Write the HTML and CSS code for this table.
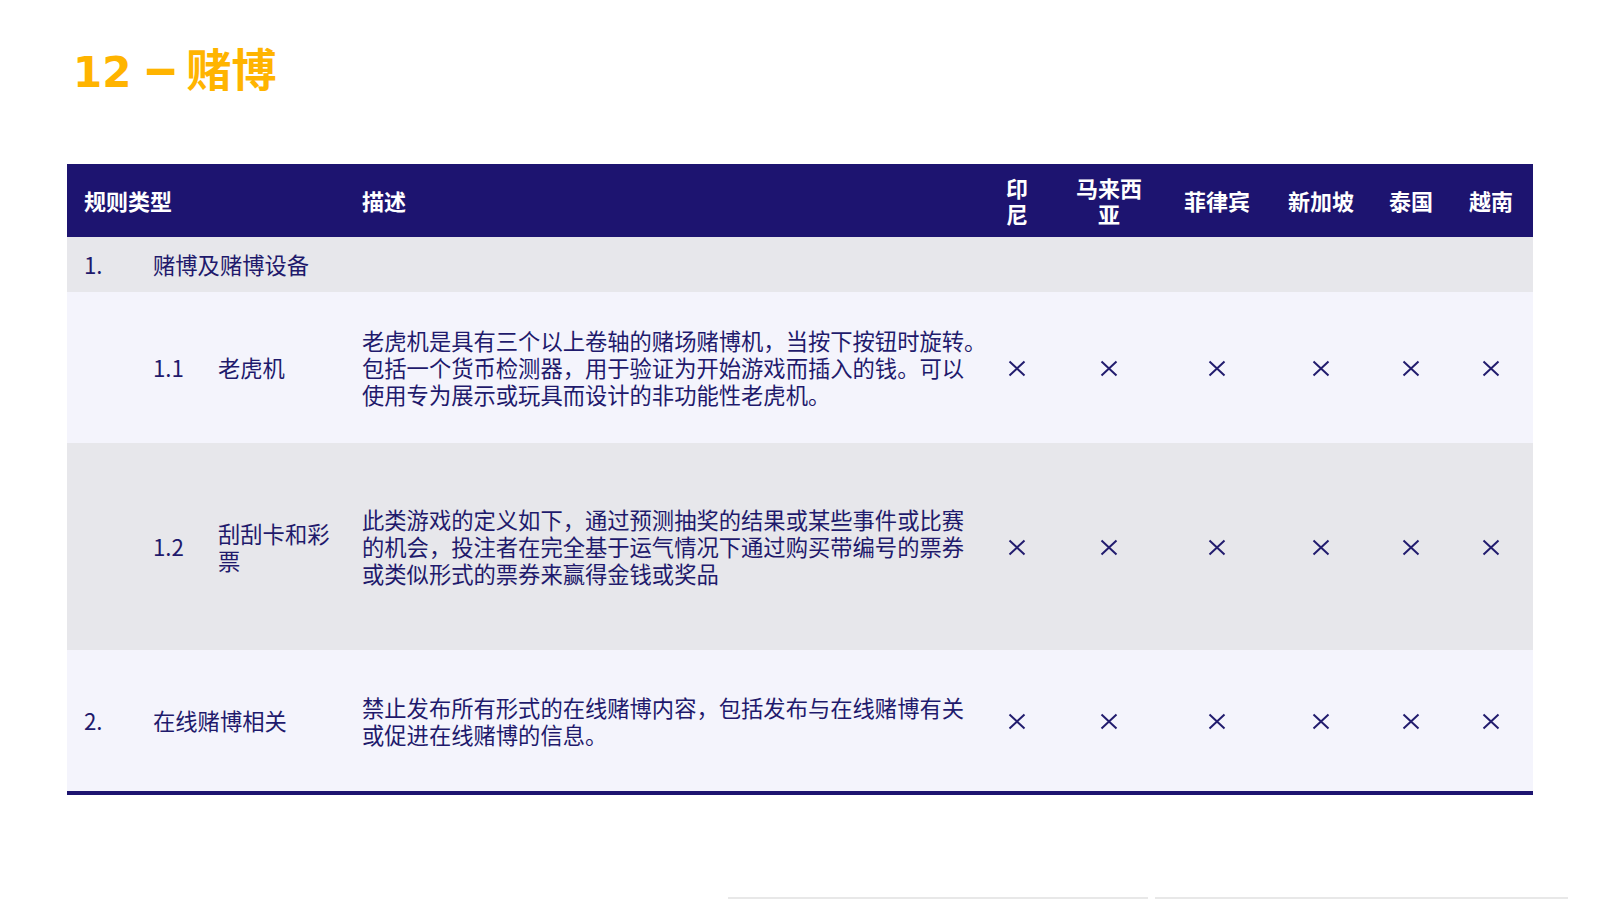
FILE: index.html
```html
<!DOCTYPE html>
<html lang="zh-CN">
<head>
<meta charset="utf-8">
<title>12 – 赌博</title>
<link rel="stylesheet" href="styles.css">
</head>
<body>
<div class="page">
  <h1 class="title"><span class="title-num">12</span><span class="title-dash">–</span><span class="title-cjk">赌博</span></h1>

  <div class="table">
    <div class="row head">
      <div class="cell span-abc pad-a">规则类型</div>
      <div class="cell pad-d">描述</div>
      <div class="cell ctr">印<br>尼</div>
      <div class="cell ctr">马来西<br>亚</div>
      <div class="cell ctr">菲律宾</div>
      <div class="cell ctr">新加坡</div>
      <div class="cell ctr">泰国</div>
      <div class="cell ctr">越南</div>
    </div>

    <div class="row section">
      <div class="cell pad-a">1.</div>
      <div class="cell span-rest pad-b">赌博及赌博设备</div>
    </div>

    <div class="row item light r11">
      <div class="cell"></div>
      <div class="cell pad-b">1.1</div>
      <div class="cell pad-c">老虎机</div>
      <div class="cell pad-d desc">老虎机是具有三个以上卷轴的赌场赌博机，当按下按钮时旋转。<br>包括一个货币检测器，用于验证为开始游戏而插入的钱。可以<br>使用专为展示或玩具而设计的非功能性老虎机。</div>
      <div class="cell ctr"><svg class="x" viewBox="0 0 18 17"><path d="M1.5 1.5L16.5 15.5M16.5 1.5L1.5 15.5"/></svg></div>
      <div class="cell ctr"><svg class="x" viewBox="0 0 18 17"><path d="M1.5 1.5L16.5 15.5M16.5 1.5L1.5 15.5"/></svg></div>
      <div class="cell ctr"><svg class="x" viewBox="0 0 18 17"><path d="M1.5 1.5L16.5 15.5M16.5 1.5L1.5 15.5"/></svg></div>
      <div class="cell ctr"><svg class="x" viewBox="0 0 18 17"><path d="M1.5 1.5L16.5 15.5M16.5 1.5L1.5 15.5"/></svg></div>
      <div class="cell ctr"><svg class="x" viewBox="0 0 18 17"><path d="M1.5 1.5L16.5 15.5M16.5 1.5L1.5 15.5"/></svg></div>
      <div class="cell ctr"><svg class="x" viewBox="0 0 18 17"><path d="M1.5 1.5L16.5 15.5M16.5 1.5L1.5 15.5"/></svg></div>
    </div>

    <div class="row item gray r12">
      <div class="cell"></div>
      <div class="cell pad-b">1.2</div>
      <div class="cell pad-c">刮刮卡和彩<br>票</div>
      <div class="cell pad-d desc">此类游戏的定义如下，通过预测抽奖的结果或某些事件或比赛<br>的机会，投注者在完全基于运气情况下通过购买带编号的票券<br>或类似形式的票券来赢得金钱或奖品</div>
      <div class="cell ctr"><svg class="x" viewBox="0 0 18 17"><path d="M1.5 1.5L16.5 15.5M16.5 1.5L1.5 15.5"/></svg></div>
      <div class="cell ctr"><svg class="x" viewBox="0 0 18 17"><path d="M1.5 1.5L16.5 15.5M16.5 1.5L1.5 15.5"/></svg></div>
      <div class="cell ctr"><svg class="x" viewBox="0 0 18 17"><path d="M1.5 1.5L16.5 15.5M16.5 1.5L1.5 15.5"/></svg></div>
      <div class="cell ctr"><svg class="x" viewBox="0 0 18 17"><path d="M1.5 1.5L16.5 15.5M16.5 1.5L1.5 15.5"/></svg></div>
      <div class="cell ctr"><svg class="x" viewBox="0 0 18 17"><path d="M1.5 1.5L16.5 15.5M16.5 1.5L1.5 15.5"/></svg></div>
      <div class="cell ctr"><svg class="x" viewBox="0 0 18 17"><path d="M1.5 1.5L16.5 15.5M16.5 1.5L1.5 15.5"/></svg></div>
    </div>

    <div class="row item light r2">
      <div class="cell pad-a">2.</div>
      <div class="cell span-bc pad-b">在线赌博相关</div>
      <div class="cell pad-d desc">禁止发布所有形式的在线赌博内容，包括发布与在线赌博有关<br>或促进在线赌博的信息。</div>
      <div class="cell ctr"><svg class="x" viewBox="0 0 18 17"><path d="M1.5 1.5L16.5 15.5M16.5 1.5L1.5 15.5"/></svg></div>
      <div class="cell ctr"><svg class="x" viewBox="0 0 18 17"><path d="M1.5 1.5L16.5 15.5M16.5 1.5L1.5 15.5"/></svg></div>
      <div class="cell ctr"><svg class="x" viewBox="0 0 18 17"><path d="M1.5 1.5L16.5 15.5M16.5 1.5L1.5 15.5"/></svg></div>
      <div class="cell ctr"><svg class="x" viewBox="0 0 18 17"><path d="M1.5 1.5L16.5 15.5M16.5 1.5L1.5 15.5"/></svg></div>
      <div class="cell ctr"><svg class="x" viewBox="0 0 18 17"><path d="M1.5 1.5L16.5 15.5M16.5 1.5L1.5 15.5"/></svg></div>
      <div class="cell ctr"><svg class="x" viewBox="0 0 18 17"><path d="M1.5 1.5L16.5 15.5M16.5 1.5L1.5 15.5"/></svg></div>
    </div>
  </div>

  <div class="footer">
    <div class="seg seg1"></div>
    <div class="seg seg2"></div>
  </div>
</div>
</body>
</html>
```

FILE: styles.css
```css
* { box-sizing: border-box; }

html, body {
  margin: 0;
  padding: 0;
  background: #ffffff;
}

body {
  font-family: "Noto Sans CJK SC", "Noto Sans", sans-serif;
  color: #1f1a6c;
}

.page {
  width: 1600px;
  height: 900px;
  overflow: hidden;
  display: flex;
  flex-direction: column;
  padding-top: 41px;
}

.title {
  margin: 0 0 70px 0;
  padding-left: 73px;
  height: 53px;
  line-height: 53px;
  font-weight: 700;
  color: #ffb400;
  white-space: nowrap;
}

.title-num {
  font-family: "DejaVu Sans", "Noto Sans CJK SC", sans-serif;
  font-size: 42px;
}

.title-dash {
  display: inline-block;
  font-family: "DejaVu Sans", sans-serif;
  font-size: 50px;
  margin: 0 13px 0 17px;
  transform: scaleX(1.4);
  position: relative;
  top: -1px;
}

.title-cjk {
  font-family: "Noto Sans CJK SC", sans-serif;
  font-size: 45px;
}

.table {
  margin-left: 67px;
  width: 1466px;
  border-bottom: 4px solid #1d1470;
}

.row {
  display: grid;
  grid-template-columns: 78px 64px 141px 631px 72px 112px 104px 104px 76px 84px;
  font-size: 22.3px;
  line-height: 27px;
}

.cell {
  display: flex;
  align-items: center;
  white-space: nowrap;
}

.head {
  height: 73px;
  background: #1d1470;
  color: #ffffff;
  font-weight: 700;
  font-size: 22px;
  line-height: 26px;
}

.head .cell {
  padding-bottom: 2px;
}

.section {
  height: 55px;
  background: #e7e7eb;
}

.light { background: #f4f4fc; }
.gray { background: #e7e7eb; }

.r11 { height: 151px; }
.r12 { height: 207px; }
.r2 { height: 141px; }

.span-abc { grid-column: 1 / 4; }
.span-bc { grid-column: 2 / 4; }
.span-rest { grid-column: 2 / 11; }

.pad-a { padding-left: 17px; }
.pad-b { padding-left: 8px; }
.pad-c { padding-left: 9px; }
.pad-d { padding-left: 12px; }

.ctr {
  justify-content: center;
  text-align: center;
}

.x {
  width: 18px;
  height: 17px;
  margin-top: 1px;
  fill: none;
  stroke: #221c6e;
  stroke-width: 2;
  stroke-linecap: butt;
}

.footer {
  margin-top: auto;
  display: flex;
  gap: 7px;
  padding-left: 728px;
  height: 3px;
}

.seg {
  height: 2px;
  background: #e8e8e8;
}
.seg1 { width: 420px; }
.seg2 { width: 413px; }
```
